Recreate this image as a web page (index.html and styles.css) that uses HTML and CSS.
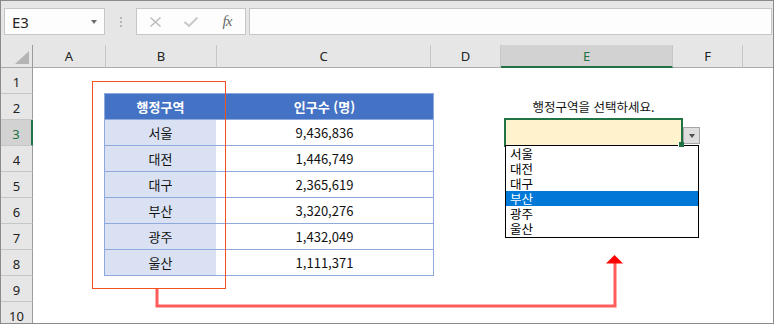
FILE: index.html
```html
<!DOCTYPE html>
<html lang="ko">
<head>
    <meta charset="utf-8">
    <title>행정구역 선택</title>
    <link rel="stylesheet" href="styles.css">
</head>
<body>
    <div class="window">
        <div class="toolbar">
            <div class="namebox"><span>E3</span><span class="caret"></span></div>
            <div class="grip"><i></i><i></i><i></i></div>
            <div class="fxbtns">
                <svg width="11" height="10" viewBox="0 0 11 10"><path d="M0.5 0.5 L10.5 9.5 M10.5 0.5 L0.5 9.5" stroke="#b9b9b9" stroke-width="1.3" fill="none"/></svg>
                <svg width="14" height="10" viewBox="0 0 14 10"><path d="M0.5 5 L5 9 L13.5 0.5" stroke="#c4c4c4" stroke-width="1.8" fill="none"/></svg>
                <span class="fx">fx</span>
            </div>
            <div class="formula"></div>
        </div>

        <div class="colheads">
            <div class="corner"><span class="tri"></span></div>
            <div class="ch a">A</div>
            <div class="ch b">B</div>
            <div class="ch c">C</div>
            <div class="ch d">D</div>
            <div class="ch e sel">E</div>
            <div class="ch f">F</div>
            <div class="ch rest"></div>
        </div>

        <div class="body">
            <div class="rowheads">
                <div>1</div>
                <div>2</div>
                <div class="sel">3</div>
                <div>4</div>
                <div>5</div>
                <div>6</div>
                <div>7</div>
                <div>8</div>
                <div>9</div>
                <div>10</div>
            </div>

            <div class="sheet">
                <div class="pop">
                    <div class="th">행정구역</div><div class="th">인구수 (명)</div>
                    <div class="td name">서울</div><div class="td">9,436,836</div>
                    <div class="td name">대전</div><div class="td">1,446,749</div>
                    <div class="td name">대구</div><div class="td">2,365,619</div>
                    <div class="td name">부산</div><div class="td">3,320,276</div>
                    <div class="td name">광주</div><div class="td">1,432,049</div>
                    <div class="td name">울산</div><div class="td">1,111,371</div>
                </div>

                <div class="prompt">행정구역을 선택하세요.</div>

                <div class="cur">
                    <div class="ddbtn"><span class="caret dark"></span></div>
                    <div class="handle"></div>
                    <div class="ddlist">
                        <div>서울</div>
                        <div>대전</div>
                        <div>대구</div>
                        <div class="hi">부산</div>
                        <div>광주</div>
                        <div>울산</div>
                    </div>
                </div>
            </div>
        </div>

        <!-- annotation: source range box and arrow to the list -->
        <svg class="annot" width="774" height="324" viewBox="0 0 774 324">
            <rect x="92.5" y="81.5" width="133" height="207" fill="none" stroke="#f4511e" stroke-width="1"/>
            <polyline points="157,289 157,306 615,306 615,262" fill="none" stroke="#ff4040" stroke-opacity="0.85" stroke-width="3"/>
            <polygon points="606,263.5 614.5,255 623,263.5" fill="#ff0000"/>
        </svg>
    </div>
</body>
</html>
```

FILE: styles.css
```css
* {
    box-sizing: border-box;
}

body {
    margin: 0;
    font-family: "Noto Sans", "Noto Sans CJK KR", sans-serif;
}

.window {
    width: 774px;
    height: 324px;
    border: 1px solid #8a8a8a;
    position: relative;
    overflow: hidden;
    background: #fff;
}

/* top bar */
.toolbar {
    height: 44px;
    background: #e6e6e6;
    display: flex;
    align-items: flex-start;
    padding: 7px 1px 0 3px;
}

.namebox {
    width: 101px;
    height: 27px;
    background: #fdfdfd;
    border: 1px solid #c6c6c6;
    display: flex;
    align-items: center;
    justify-content: space-between;
    padding: 0 7px 0 7px;
    font-size: 15px;
    color: #262626;
}

.caret {
    width: 0;
    height: 0;
    border-left: 3.5px solid transparent;
    border-right: 3.5px solid transparent;
    border-top: 4px solid #6d6d6d;
}

.caret.dark {
    border-top-color: #505050;
}

.grip {
    width: 31px;
    height: 27px;
    display: flex;
    flex-direction: column;
    align-items: center;
    justify-content: center;
    gap: 2px;
}

.grip i {
    width: 2px;
    height: 2px;
    background: #b5b5b5;
}

.fxbtns {
    width: 110px;
    height: 27px;
    background: #fdfdfd;
    border: 1px solid #c6c6c6;
    display: grid;
    grid-template-columns: 36px 36px 36px;
    align-items: center;
    justify-items: center;
}

.fx {
    font-family: "Liberation Serif", serif;
    font-style: italic;
    font-size: 15px;
    color: #6a6a6a;
    line-height: 1;
    letter-spacing: -1px;
}

.formula {
    flex: 1;
    height: 27px;
    margin-left: 3px;
    background: #fdfdfd;
    border: 1px solid #c6c6c6;
}

/* column headers */
.colheads {
    display: flex;
    height: 23px;
    background: #e6e6e6;
}

.colheads > div {
    height: 23px;
    border-right: 1px solid #c6c6c6;
    border-bottom: 1px solid #ababab;
    text-align: center;
    font-size: 13px;
    line-height: 22px;
    color: #222;
}

.corner {
    width: 32px;
    position: relative;
    border-right-color: #9b9b9b !important;
}

.tri {
    position: absolute;
    right: 3px;
    bottom: 3px;
    width: 0;
    height: 0;
    border-left: 14px solid transparent;
    border-bottom: 13px solid #b4b4b4;
}

.ch.a { width: 73px; }
.ch.b { width: 111px; }
.ch.c { width: 214px; }
.ch.d { width: 70px; }
.ch.e { width: 172px; }
.ch.f { width: 70px; }
.ch.rest { flex: 1; border-right: none; }

.ch.sel {
    background: #d2d2d2;
    color: #217346;
    border-bottom: 2px solid #217346;
}

/* rows */
.body {
    display: flex;
    height: 255px;
    overflow: hidden;
}

.rowheads {
    width: 32px;
    flex-shrink: 0;
    background: #e6e6e6;
}

.rowheads div {
    height: 26px;
    border-bottom: 1px solid #c6c6c6;
    border-right: 1px solid #9b9b9b;
    text-align: center;
    font-size: 13px;
    line-height: 25px;
    padding-top: 2px;
    color: #222;
}

.rowheads div.sel {
    background: #d2d2d2;
    color: #217346;
    border-right: 2px solid #217346;
}

.sheet {
    flex: 1;
    display: grid;
    grid-template-columns: 73px 111px 214px 70px 172px 70px 1fr;
    grid-template-rows: repeat(10, 26px);
    font-family: "Noto Sans CJK KR", sans-serif;
    font-size: 13px;
    color: #111;
}

/* data table */
.pop {
    grid-column: 2 / 4;
    grid-row: 2 / 9;
    margin: -1px -3px 0 -2px;
    border: 1px solid #8ea9db;
    display: grid;
    grid-template-columns: 111px 1fr;
    grid-template-rows: 25px repeat(6, 26px);
}

.pop div {
    text-align: center;
    line-height: 25px;
}

.pop .th {
    background: #4472c4;
    color: #fff;
    font-weight: bold;
}

.pop .td {
    border-top: 1px solid #8ea9db;
}

.pop .td.name {
    background: #d9e1f2;
}

.prompt {
    grid-column: 5;
    grid-row: 2;
    text-align: center;
    padding-left: 13px;
    font-size: 12.5px;
    line-height: 26px;
    white-space: nowrap;
}

/* selected cell with validation list */
.cur {
    grid-column: 5;
    grid-row: 3;
    margin: -2px -10px -1px 3px;
    border: 2px solid #217346;
    background: #fff2cc;
    position: relative;
}

.ddbtn {
    position: absolute;
    left: 177px;
    top: 7px;
    width: 17px;
    height: 17px;
    background: #dedede;
    border: 1px solid #a6a6a6;
    display: flex;
    align-items: center;
    justify-content: center;
}

.handle {
    position: absolute;
    left: 172px;
    top: 22px;
    width: 6px;
    height: 5px;
    background: #217346;
    border-left: 1px solid #fff;
    z-index: 3;
}

.ddlist {
    position: absolute;
    left: -1px;
    top: 25px;
    width: 194px;
    height: 93px;
    background: #fff;
    border: 1px solid #000;
    z-index: 2;
}

.ddlist div {
    height: 15px;
    line-height: 15px;
    padding-left: 4px;
    font-size: 12.5px;
    color: #000;
}

.ddlist div.hi {
    background: #0078d7;
    color: #fff;
}

.annot {
    position: absolute;
    left: -1px;
    top: -1px;
    pointer-events: none;
}
```
